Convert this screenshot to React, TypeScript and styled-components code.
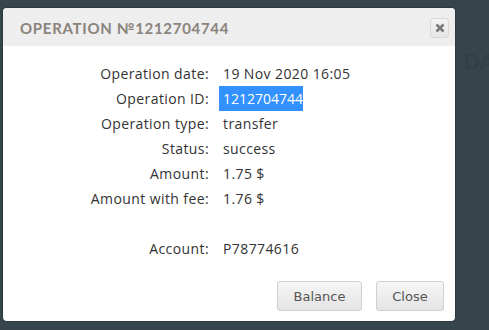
import React from "react";
import styled, { createGlobalStyle } from "styled-components";

const Global = createGlobalStyle`
  html, body { margin: 0; padding: 0; }
  body { background: #36444c; width: 489px; height: 330px; overflow: hidden; position: relative; }
`;

const Page = styled.div`
  width: 489px;
  height: 330px;
  display: flex;
  justify-content: flex-end;
  padding: 49px 0 0 0;
  box-sizing: border-box;
  overflow: hidden;
`;

const BgHeading = styled.div`
  font-family: "Lato", sans-serif;
  font-weight: 700;
  font-size: 20px;
  color: #323f47;
  margin-right: -6px;
  letter-spacing: 1px;
`;

const Dialog = styled.div`
  position: absolute;
  left: 3px;
  top: 8px;
  width: 452px;
  height: 313px;
  background: #fff;
  border-radius: 4px;
  box-shadow: 0 0 0 1px rgba(0, 0, 0, 0.15);
  display: flex;
  flex-direction: column;
  overflow: hidden;
`;

const Header = styled.div`
  height: 38px;
  background: #eeeeee;
  display: flex;
  align-items: center;
  justify-content: space-between;
  padding: 0 6px 0 17px;
  flex-shrink: 0;
`;

const Title = styled.div`
  font-family: "Lato", sans-serif;
  font-size: 15px;
  font-weight: 700;
  letter-spacing: 0.7px;
  color: #8a837c;
  padding-top: 1px;
`;

const CloseX = styled.button`
  width: 19px;
  height: 20px;
  padding: 0;
  border: 1px solid #d8d8d8;
  border-radius: 3px;
  background: linear-gradient(#f4f4f4, #e6e6e6);
  display: flex;
  align-items: center;
  justify-content: center;
  margin-top: 1px;
`;

const Body = styled.div`
  flex: 1;
  padding: 15px 0 0 0;
  display: grid;
  grid-template-columns: 206px auto;
  grid-auto-rows: 25px;
  column-gap: 14px;
  align-content: start;
`;

const Label = styled.div`
  font-family: "Open Sans", sans-serif;
  font-size: 14px;
  letter-spacing: 0.4px;
  color: #333;
  text-align: right;
  line-height: 25px;
`;

const Value = styled.div`
  font-family: "Open Sans", sans-serif;
  font-size: 14px;
  letter-spacing: 0.4px;
  color: #333;
  line-height: 25px;
  margin-left: -4px;
  white-space: nowrap;
`;

const Selected = styled.span`
  display: inline-block;
  background: #3390ff;
  color: #fff;
  letter-spacing: 0;
  padding: 0 0 0 4px;
`;

const Plain = styled.span`
  padding-left: 4px;
`;

const Spacer = styled.div`
  grid-column: span 2;
`;

const Footer = styled.div`
  display: flex;
  justify-content: flex-end;
  gap: 14px;
  padding: 0 11px 10px 0;
`;

const Btn = styled.button<{ $w: number }>`
  width: ${(p) => p.$w}px;
  height: 30px;
  border: 1px solid #d0d0d0;
  border-radius: 3px;
  background: linear-gradient(#f6f6f6, #e4e4e4);
  font-family: "DejaVu Sans", sans-serif;
  font-size: 13px;
  color: #555;
  padding: 0;
`;

const rows: [string, string][] = [
  ["Operation date:", "19 Nov 2020 16:05"],
  ["Operation ID:", "1212704744"],
  ["Operation type:", "transfer"],
  ["Status:", "success"],
  ["Amount:", "1.75 $"],
  ["Amount with fee:", "1.76 $"],
];

export default function App() {
  return (
    <>
      <Global />
      <Page>
        <BgHeading>DA</BgHeading>
      </Page>
      <Dialog>
        <Header>
          <Title>OPERATION №1212704744</Title>
          <CloseX aria-label="close">
            <svg width="10" height="10" viewBox="0 0 10 10">
              <path d="M1.5 1.5 L8.5 8.5 M8.5 1.5 L1.5 8.5" stroke="#7a7a7a" strokeWidth="2.6" strokeLinecap="butt" />
            </svg>
          </CloseX>
        </Header>
        <Body>
          {rows.map(([l, v]) => (
            <React.Fragment key={l}>
              <Label>{l}</Label>
              <Value>{v === "1212704744" ? <Selected>{v}</Selected> : <Plain>{v}</Plain>}</Value>
            </React.Fragment>
          ))}
          <Spacer />
          <Label>Account:</Label>
          <Value>
            <Plain>P78774616</Plain>
          </Value>
        </Body>
        <Footer>
          <Btn $w={85}>Balance</Btn>
          <Btn $w={68}>Close</Btn>
        </Footer>
      </Dialog>
    </>
  );
}
